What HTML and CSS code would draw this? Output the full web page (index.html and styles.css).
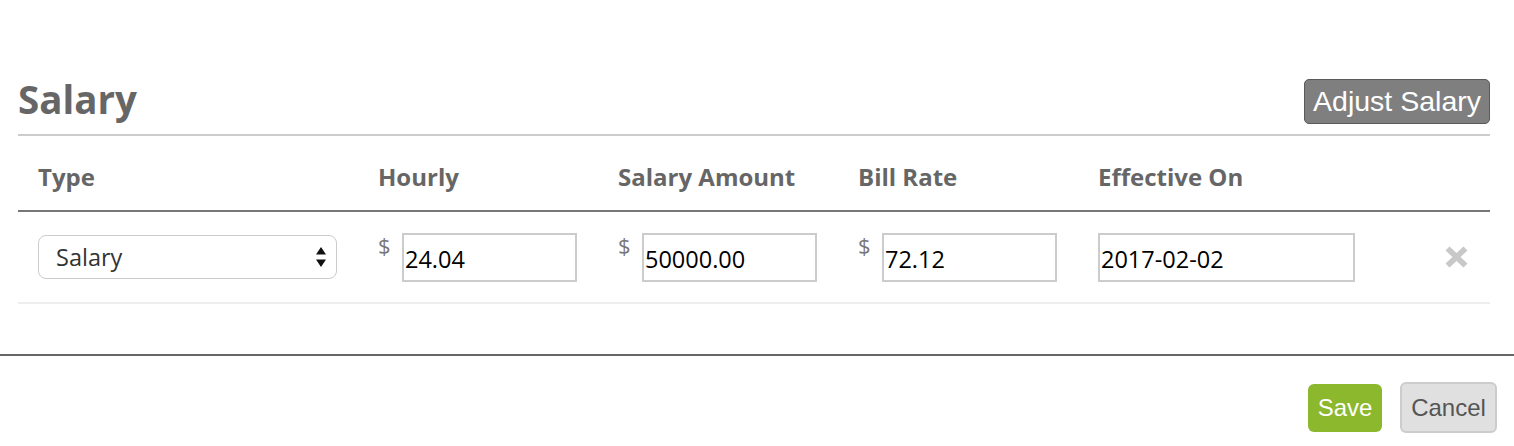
FILE: index.html
```html
<!DOCTYPE html>
<html lang="en">
<head>
  <meta charset="UTF-8">
  <title>Salary</title>
  <link rel="stylesheet" href="styles.css">
</head>
<body>

  <div class="panel">
    <div class="panel-head">
      <h1>Salary</h1>
      <button class="adjust-btn">Adjust Salary</button>
    </div>

    <div class="salary-grid head-row">
      <div class="cell">Type</div>
      <div class="cell">Hourly</div>
      <div class="cell">Salary Amount</div>
      <div class="cell">Bill Rate</div>
      <div class="cell">Effective On</div>
      <div class="cell"></div>
    </div>

    <div class="salary-grid data-row">
      <div class="cell">
        <div class="select-wrap">
          <select class="type-select">
            <option>Salary</option>
            <option>Hourly</option>
          </select>
          <svg class="select-arrows" width="10" height="20" viewBox="0 0 10 20">
            <path d="M5 0 L10 7.5 L0 7.5 Z M0 12.5 L10 12.5 L5 20 Z" fill="#111"/>
          </svg>
        </div>
      </div>
      <div class="cell money">
        <span class="currency">$</span>
        <input type="text" class="field" value="24.04">
      </div>
      <div class="cell money">
        <span class="currency">$</span>
        <input type="text" class="field" value="50000.00">
      </div>
      <div class="cell money">
        <span class="currency">$</span>
        <input type="text" class="field" value="72.12">
      </div>
      <div class="cell">
        <input type="text" class="field date-field" value="2017-02-02">
      </div>
      <div class="cell remove-cell">
        <svg class="remove-icon" width="23" height="22" viewBox="0 0 23 22">
          <path d="M4.5 0.5 L11.5 7 L18.5 0.5 L22.5 4.5 L15.5 11 L22.5 17.5 L18.5 21.5 L11.5 15 L4.5 21.5 L0.5 17.5 L7.5 11 L0.5 4.5 Z" fill="#c8c8c8"/>
        </svg>
      </div>
    </div>
  </div>

  <div class="panel-foot">
    <button class="save-btn">Save</button>
    <button class="cancel-btn">Cancel</button>
  </div>

</body>
</html>
```

FILE: styles.css
```css
body {
  margin: 0;
  font-family: 'Open Sans', sans-serif;
  background: #fff;
  color: #333;
}
.panel {
  padding: 79px 24px 0 18px;
}
.panel-head {
  display: flex;
  justify-content: space-between;
  align-items: flex-start;
  height: 55px;
  border-bottom: 2px solid #ccc;
}
h1 {
  margin: -3px 0 0 0;
  font-size: 38.5px;
  line-height: 46px;
  font-weight: 700;
  color: #666;
}
.adjust-btn {
  height: 45px;
  padding: 0 8px;
  font-family: 'Liberation Sans', Arial, sans-serif;
  font-size: 28.5px;
  color: #fff;
  background: #7f7f7f;
  border: 1px solid #5a5a5a;
  border-radius: 5px;
  cursor: pointer;
}
.salary-grid {
  display: grid;
  grid-template-columns: 340px 240px 240px 240px 300px 1fr;
}
.cell {
  padding-left: 20px;
}
.head-row {
  box-sizing: border-box;
  height: 76px;
  padding-top: 7px;
  align-items: center;
  border-bottom: 2px solid #777;
  font-size: 24px;
  font-weight: 700;
  color: #666;
}
.data-row {
  height: 90px;
  align-items: center;
  border-bottom: 2px solid #eee;
}
.select-wrap {
  position: relative;
  width: 299px;
}
.type-select {
  appearance: none;
  -webkit-appearance: none;
  width: 100%;
  height: 44px;
  padding: 0 0 0 17px;
  font-family: 'Open Sans', sans-serif;
  font-size: 23.5px;
  color: #333;
  background: #fff;
  border: 1px solid #ccc;
  border-radius: 8px;
}
.select-arrows {
  position: absolute;
  right: 11px;
  top: 12px;
  pointer-events: none;
}
.money {
  display: flex;
  align-items: flex-start;
}
.currency {
  width: 24px;
  margin-top: -3px;
  font-size: 22px;
  line-height: 30px;
  color: #777;
}
.field {
  box-sizing: border-box;
  width: 175px;
  height: 49px;
  padding: 3px 0 0 1px;
  font-family: 'Open Sans', sans-serif;
  font-size: 23.5px;
  color: #000;
  border: 2px solid #ccc;
}
.date-field {
  width: 257px;
}
.remove-cell {
  display: flex;
  justify-content: flex-end;
  padding-right: 22px;
}
.panel-foot {
  margin-top: 50px;
  border-top: 2px solid #666;
  display: flex;
  justify-content: flex-end;
  align-items: center;
  gap: 18px;
  padding: 26px 17px 0 0;
}
.save-btn, .cancel-btn {
  font-family: 'Liberation Sans', Arial, sans-serif;
  font-size: 24px;
  border-radius: 6px;
  cursor: pointer;
}
.save-btn {
  width: 74px;
  height: 48px;
  color: #fff;
  background: #8cb82e;
  border: none;
}
.cancel-btn {
  width: 97px;
  height: 51px;
  color: #555;
  background: #e0e0e0;
  border: 2px solid #ccc;
}
```
